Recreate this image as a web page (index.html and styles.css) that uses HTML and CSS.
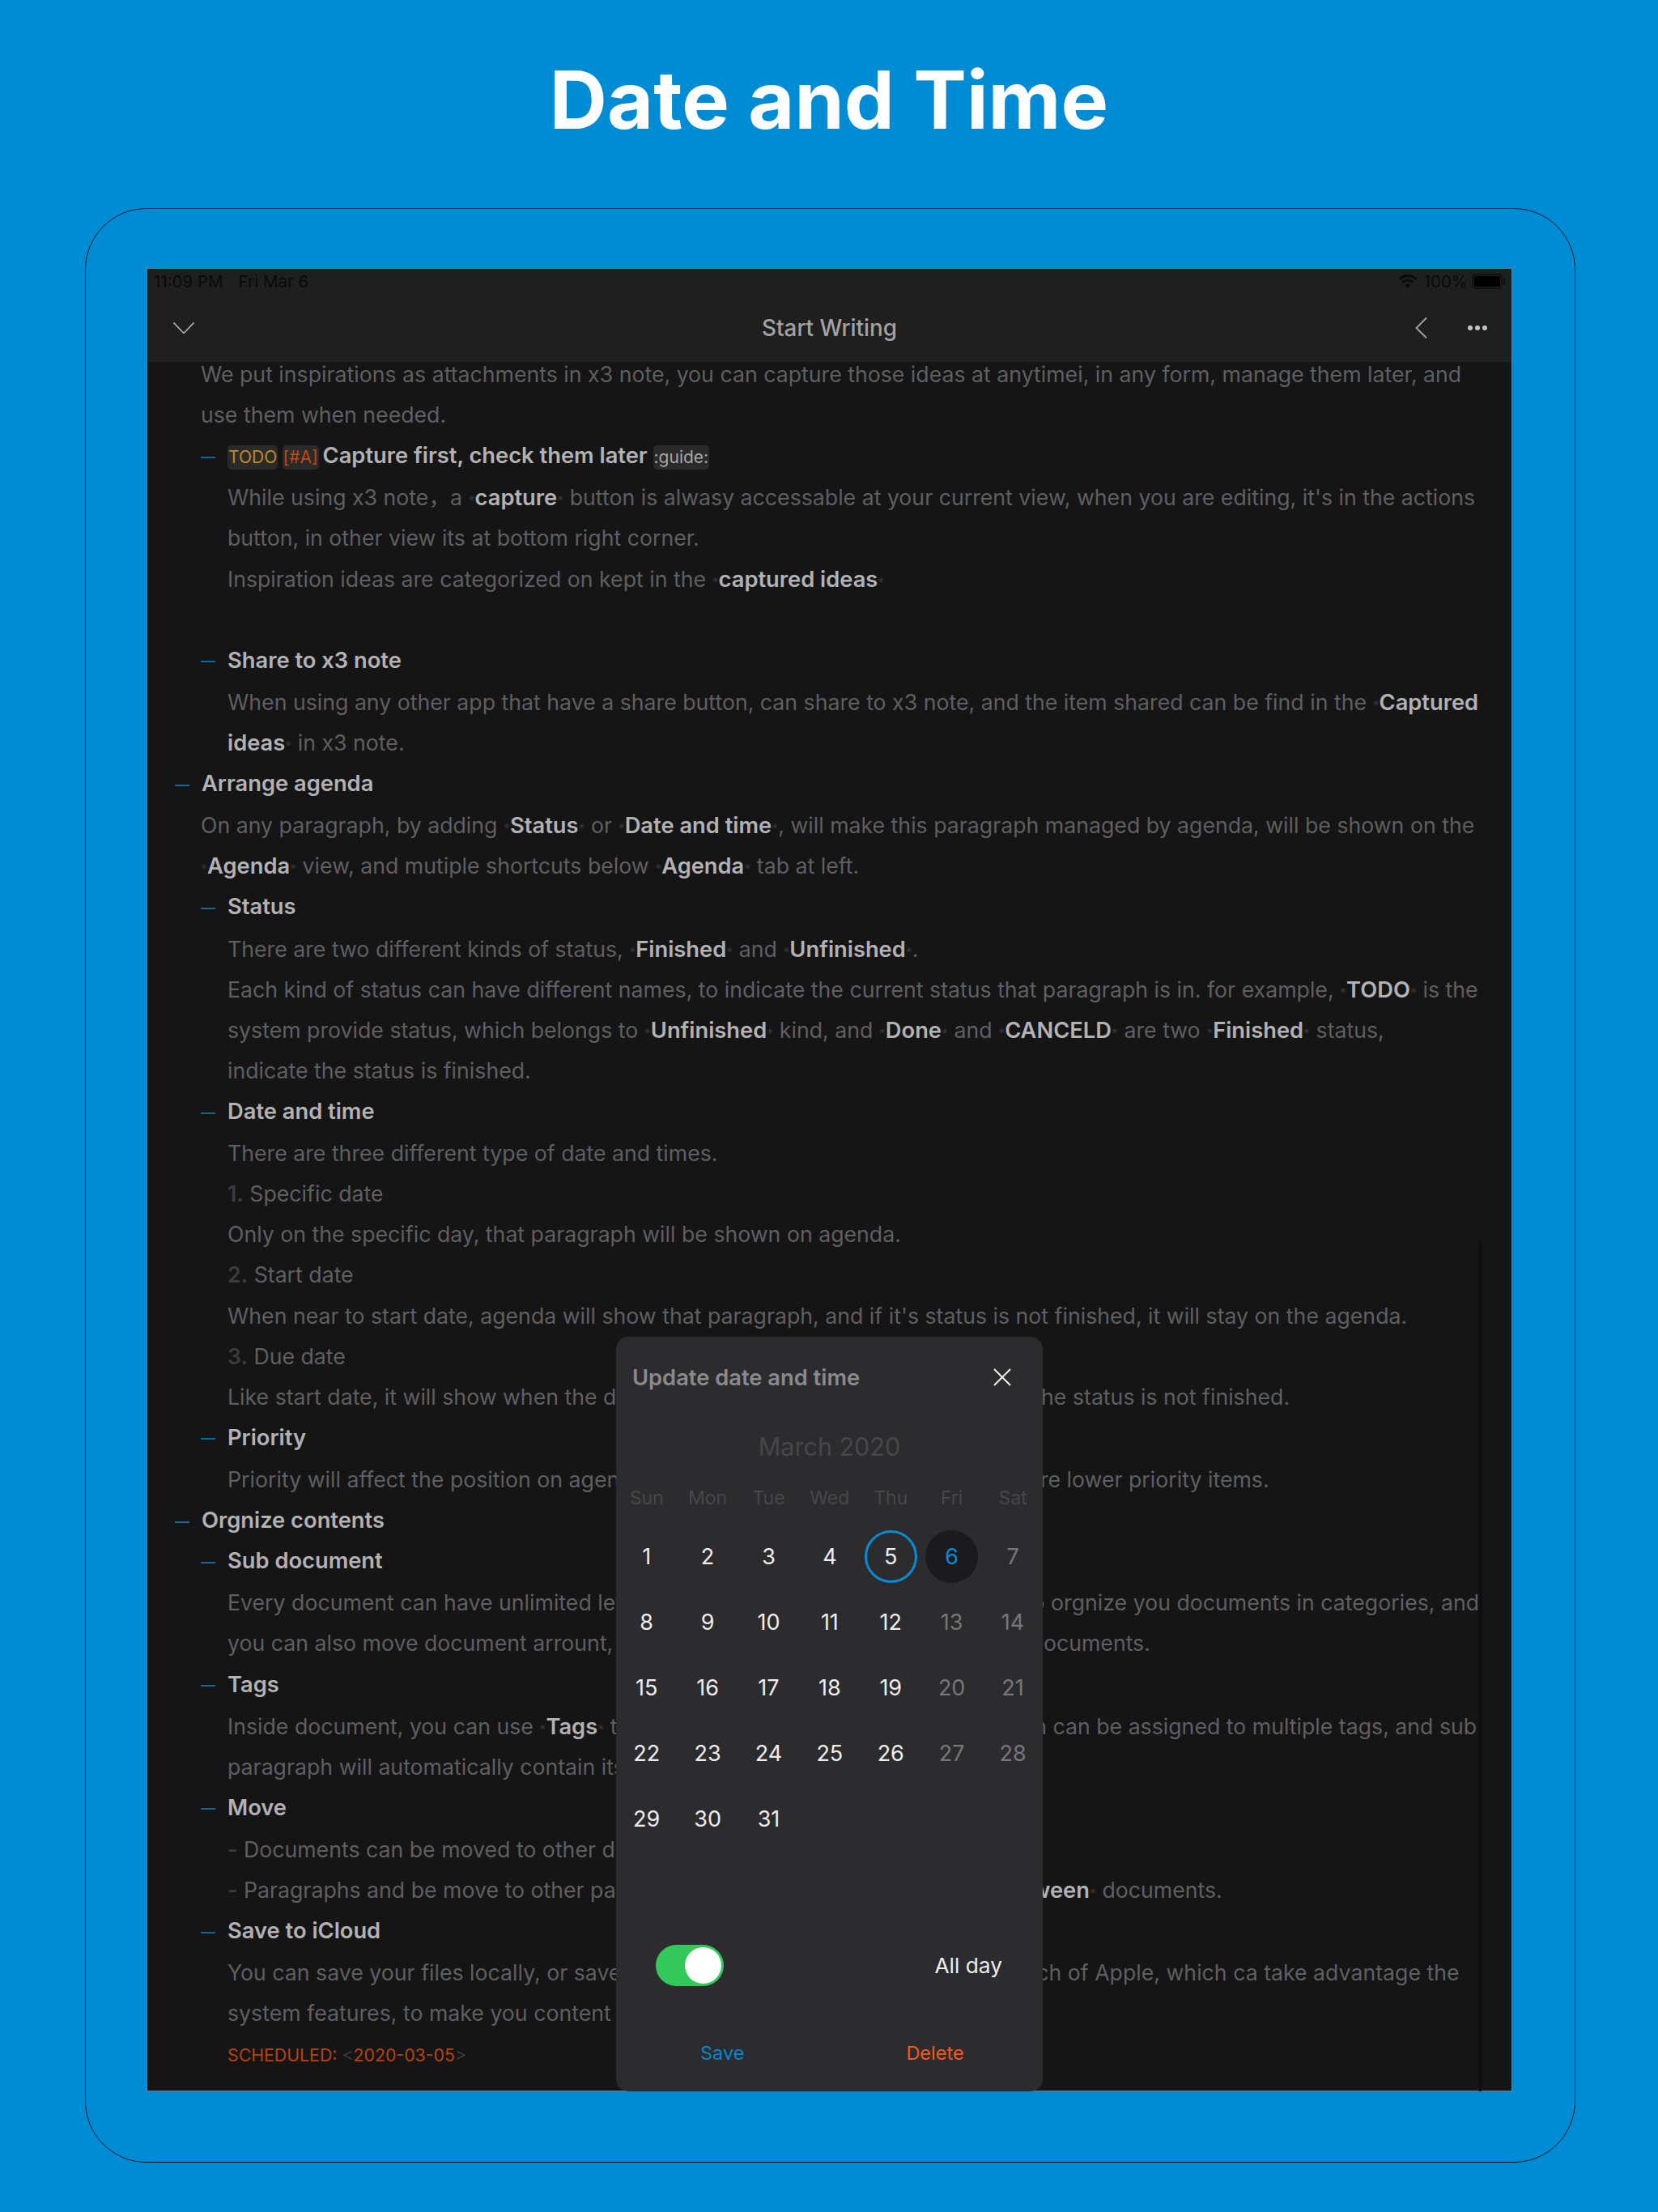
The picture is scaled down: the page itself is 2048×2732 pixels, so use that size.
FILE: index.html
```html
<!DOCTYPE html>
<html>
    <head>
        <title>Date and Time</title>
        <meta charset="UTF-8" />
        <link rel="stylesheet" href="styles.css">
    </head>
    <body>
        <h1 class="headline">Date and Time</h1>
        <div class="device">
            <div class="screen">
                <div class="topbar">
                    <div class="status">
                        <span class="clock">11:09 PM</span>
                        <span class="today">Fri Mar 6</span>
                        <span class="status-right">
                            <svg class="wifi" width="24" height="18" viewBox="0 0 24 18"><path d="M12 18l-3.6-4a5 5 0 0 1 7.2 0z" fill="#0a0a0a"/><path d="M5.6 10.6a9 9 0 0 1 12.8 0M2 6.8a14 14 0 0 1 20 0" fill="none" stroke="#0a0a0a" stroke-width="3"/></svg>
                            <span class="battery-text">100%</span>
                            <span class="battery"><span class="battery-fill"></span></span>
                        </span>
                    </div>
                    <div class="navbar">
                        <svg class="nav-icon" width="26" height="14" viewBox="0 0 26 14"><path d="M0.5 0.5L13 13.5L25.5 0.5" fill="none" stroke="#b0b0b2" stroke-width="1.6"/></svg>
                        <span class="nav-title">Start Writing</span>
                        <svg class="nav-back" width="15" height="26" viewBox="0 0 15 26"><path d="M14 0.5L1.5 13L14 25.5" fill="none" stroke="#a8a8aa" stroke-width="1.8"/></svg>
                        <span class="dots"><i></i><i></i><i></i></span>
                    </div>
                </div>

                <div class="doc">
                    <div class="row l1">We put inspirations as attachments in x3 note, you can capture those ideas at anytimei, in any form, manage them later, and</div>
                    <div class="row l1">use them when needed.</div>
                    <div class="row head l1"><span class="dash"></span><span class="tag todo">TODO</span> <span class="tag prio">[#A]</span> Capture first, check them later <span class="tag guide">:guide:</span></div>
                    <div class="row l2">While using x3 note，a <b>capture</b> button is alwasy accessable at your current view, when you are editing, it's in the actions</div>
                    <div class="row l2">button, in other view its at bottom right corner.</div>
                    <div class="row l2">Inspiration ideas are categorized on kept in the <b>captured ideas</b></div>
                    <div class="row l2"></div>
                    <div class="row head l1"><span class="dash"></span>Share to x3 note</div>
                    <div class="row l2">When using any other app that have a share button, can share to x3 note, and the item shared can be find in the <b class="open">Captured</b></div>
                    <div class="row l2"><b class="close">ideas</b> in x3 note.</div>
                    <div class="row head l0"><span class="dash"></span>Arrange agenda</div>
                    <div class="row l1">On any paragraph, by adding <b>Status</b> or <b>Date and time</b>, will make this paragraph managed by agenda, will be shown on the</div>
                    <div class="row l1"><b>Agenda</b> view, and mutiple shortcuts below <b>Agenda</b> tab at left.</div>
                    <div class="row head l1"><span class="dash"></span>Status</div>
                    <div class="row l2">There are two different kinds of status, <b>Finished</b> and <b>Unfinished</b>.</div>
                    <div class="row l2">Each kind of status can have different names, to indicate the current status that paragraph is in. for example, <b>TODO</b> is the</div>
                    <div class="row l2">system provide status, which belongs to <b>Unfinished</b> kind, and <b>Done</b> and <b>CANCELD</b> are two <b>Finished</b> status,</div>
                    <div class="row l2">indicate the status is finished.</div>
                    <div class="row head l1"><span class="dash"></span>Date and time</div>
                    <div class="row l2">There are three different type of date and times.</div>
                    <div class="row l2"><span class="num">1.</span> Specific date</div>
                    <div class="row l2">Only on the specific day, that paragraph will be shown on agenda.</div>
                    <div class="row l2"><span class="num">2.</span> Start date</div>
                    <div class="row l2">When near to start date, agenda will show that paragraph, and if it's status is not finished, it will stay on the agenda.</div>
                    <div class="row l2"><span class="num">3.</span> Due date</div>
                    <div class="row l2">Like start date, it will show when the due date is near, and it stays on agenda if the status is not finished.</div>
                    <div class="row head l1"><span class="dash"></span>Priority</div>
                    <div class="row l2">Priority will affect the position on agenda, A is the highest priority, so, B and C are lower priority items.</div>
                    <div class="row head flush l0"><span class="dash"></span>Orgnize contents</div>
                    <div class="row head l1"><span class="dash"></span>Sub document</div>
                    <div class="row l2">Every document can have unlimited levels of sub documents you can use this to orgnize you documents in categories, and</div>
                    <div class="row l2">you can also move document arrount, from one category to another list of sub documents.</div>
                    <div class="row head l1"><span class="dash"></span>Tags</div>
                    <div class="row l2">Inside document, you can use <b>Tags</b> to mark all of paragraphs and each section can be assigned to multiple tags, and sub</div>
                    <div class="row l2">paragraph will automatically contain its parent tags.</div>
                    <div class="row head l1"><span class="dash"></span>Move</div>
                    <div class="row l2"><span class="num">-</span> Documents can be moved to other documents.</div>
                    <div class="row l2"><span class="num">-</span> Paragraphs and be move to other paragraphs in the same documents, or <b>between</b> documents.</div>
                    <div class="row head l1"><span class="dash"></span>Save to iCloud</div>
                    <div class="row l2">You can save your files locally, or save then to iCloud, iCloud is a feature and tech of Apple, which ca take advantage the</div>
                    <div class="row l2">system features, to make you content synced.</div>
                    <div class="row l2 sched">SCHEDULED: <span class="angle">&lt;</span>2020-03-05<span class="angle">&gt;</span></div>
                </div>

                <div class="scrollbar"></div>

                <div class="modal">
                    <div class="modal-head">
                        <span class="modal-title">Update date and time</span>
                        <svg width="22" height="22" viewBox="0 0 22 22"><path d="M1 1L21 21M21 1L1 21" stroke="#f2f2f2" stroke-width="2"/></svg>
                    </div>
                    <div class="month">March 2020</div>
                    <div class="weekdays">
                        <span>Sun</span><span>Mon</span><span>Tue</span><span>Wed</span><span>Thu</span><span>Fri</span><span>Sat</span>
                    </div>
                    <div class="dates">
                        <span>1</span><span>2</span><span>3</span><span>4</span><span class="today-ring">5</span><span class="picked">6</span><span class="off">7</span>
                        <span>8</span><span>9</span><span>10</span><span>11</span><span>12</span><span class="off">13</span><span class="off">14</span>
                        <span>15</span><span>16</span><span>17</span><span>18</span><span>19</span><span class="off">20</span><span class="off">21</span>
                        <span>22</span><span>23</span><span>24</span><span>25</span><span>26</span><span class="off">27</span><span class="off">28</span>
                        <span>29</span><span>30</span><span>31</span>
                    </div>
                    <div class="allday">
                        <span class="switch"><span class="knob"></span></span>
                        <span>All day</span>
                    </div>
                    <div class="actions">
                        <span class="save">Save</span>
                        <span class="delete">Delete</span>
                    </div>
                </div>
            </div>
        </div>
    </body>
</html>
```

FILE: styles.css
```css
* {
    box-sizing: border-box;
}

body {
    margin: 0;
    width: 2048px;
    height: 2732px;
    overflow: hidden;
    background-color: #008cd4;
    font-family: Inter, "Noto Sans CJK SC", sans-serif;
}

.headline {
    margin: 0;
    height: 257px;
    padding-top: 60px;
    text-align: center;
    font-size: 98.5px;
    line-height: 128px;
    font-weight: 700;
    color: #ffffff;
}

.device {
    width: 1841px;
    height: 2414px;
    margin-left: 105px;
    padding: 73px 0 0 75px;
    border: 1.5px solid #03161f;
    border-radius: 76px;
}

.screen {
    position: relative;
    width: 1687px;
    height: 2252px;
    overflow: hidden;
    background-color: #151516;
    box-shadow: inset 0 0 0 1px #77787a;
}

.topbar {
    position: relative;
    z-index: 1;
    height: 115px;
    margin: 1px 1px 0;
    background-color: #1f1f20;
}

.status {
    display: flex;
    align-items: center;
    height: 30px;
    padding: 0 7px 0 8px;
    font-size: 20.5px;
    color: #0a0a0a;
}

.today {
    margin-left: 19px;
}

.status-right {
    display: flex;
    align-items: center;
    margin-left: auto;
}

.battery-text {
    margin-left: 8px;
}

.battery {
    position: relative;
    width: 38px;
    height: 19px;
    margin-left: 5px;
    margin-right: 4px;
    padding: 1px;
    border: 2px solid #111112;
    border-radius: 5px;
}

.battery::after {
    content: "";
    position: absolute;
    right: -5px;
    top: 3px;
    width: 2px;
    height: 9px;
    background-color: #111112;
}

.battery-fill {
    display: block;
    height: 100%;
    border-radius: 2px;
    background-color: #000000;
}

.navbar {
    display: flex;
    align-items: center;
    height: 85px;
    padding-left: 32px;
    padding-right: 30px;
}

.nav-title {
    position: absolute;
    left: 0;
    right: 0;
    text-align: center;
    font-size: 27.8px;
    font-weight: 500;
    color: #a2a2a4;
}

.nav-back {
    margin-left: auto;
}

.dots {
    display: flex;
    gap: 3px;
    margin-left: 50px;
}

.dots i {
    width: 6px;
    height: 6px;
    border-radius: 50%;
    background-color: #c4c4c6;
}

.doc {
    margin-top: -9px;
    font-size: 26.7px;
    color: #5f5f62;
}

.row {
    height: 50.12px;
    line-height: 48px;
    white-space: nowrap;
}

.head {
    margin-bottom: 2px;
    line-height: 50px;
    font-size: 27.3px;
    font-weight: 600;
    color: #b2b2b5;
}

.flush {
    margin-bottom: 0;
}

.l0 {
    padding-left: 68px;
}

.l1 {
    padding-left: 67px;
}

.l2 {
    padding-left: 100px;
}

.head.l0 {
    padding-left: 35px;
}

.head.l1 {
    padding-left: 67px;
}

.dash {
    display: inline-block;
    width: 18px;
    height: 2px;
    margin-right: 15px;
    vertical-align: middle;
    background-color: #0a6a9e;
}

.tag {
    display: inline-block;
    padding: 0 1px;
    border-radius: 5px;
    line-height: 30px;
    font-size: 21px;
    font-weight: 400;
    background-color: #2a2a2b;
}

.todo {
    color: #c08a22;
}

.prio {
    margin-left: -1.5px;
    margin-right: -2px;
    color: #c4480f;
}

.guide {
    color: #a8a8aa;
}

b {
    font-size: 27.3px;
    font-weight: 600;
    color: #b2b2b5;
}

b::before,
b::after {
    content: "*";
    font-size: 16px;
    font-weight: 400;
    color: #353537;
}

b.open::after,
b.close::before {
    content: none;
}

.num {
    font-weight: 600;
    color: #3c3c3e;
}

.sched {
    line-height: 52px;
    font-size: 21.3px;
    color: #b5430f;
}

.angle {
    color: #3c3c3e;
}

.scrollbar {
    position: absolute;
    left: 1645px;
    top: 1200px;
    bottom: 0;
    width: 5px;
    border-radius: 3px;
    background-color: #0e0e0e;
}

.modal {
    position: absolute;
    z-index: 2;
    left: 580px;
    top: 1320px;
    bottom: 0;
    width: 527px;
    border-radius: 15px;
    background-color: #2c2c2e;
}

.modal-head {
    display: flex;
    align-items: center;
    justify-content: space-between;
    height: 100px;
    padding: 0 39px 0 20px;
}

.modal-title {
    font-size: 27.3px;
    font-weight: 600;
    color: #8a8a8e;
}

.month {
    height: 72px;
    text-align: center;
    line-height: 72px;
    font-size: 30.5px;
    color: #47474a;
}

.weekdays,
.dates {
    display: grid;
    grid-template-columns: repeat(7, 75.4px);
    justify-items: center;
}

.weekdays {
    height: 40px;
    margin-top: 7px;
    line-height: 40px;
    font-size: 23px;
    color: #47474a;
}

.dates {
    grid-auto-rows: 81px;
    margin-top: 12px;
    font-size: 27px;
    color: #eeeeee;
}

.dates span {
    display: flex;
    align-items: center;
    justify-content: center;
    width: 65px;
    height: 65px;
    margin-top: 8px;
    border-radius: 50%;
}

.dates .off {
    color: #77777a;
}

.dates .today-ring {
    border: 3px solid #0a8ad0;
}

.dates .picked {
    color: #0a8ad0;
    background-color: #1b1b1d;
}

.allday {
    display: flex;
    align-items: center;
    justify-content: space-between;
    margin-top: 110px;
    height: 60px;
    padding: 0 50px 0 49px;
    font-size: 26.3px;
    color: #eeeeee;
}

.switch {
    display: flex;
    justify-content: flex-end;
    align-items: center;
    width: 84px;
    height: 51px;
    padding-right: 3px;
    border-radius: 26px;
    background-color: #34c759;
}

.knob {
    width: 45px;
    height: 45px;
    border-radius: 50%;
    background-color: #ffffff;
}

.actions {
    display: flex;
    margin-top: 64px;
    font-size: 23.5px;
}

.save {
    margin-left: 104px;
    color: #0a84c8;
}

.delete {
    margin-left: 200px;
    color: #f05a1e;
}
```
